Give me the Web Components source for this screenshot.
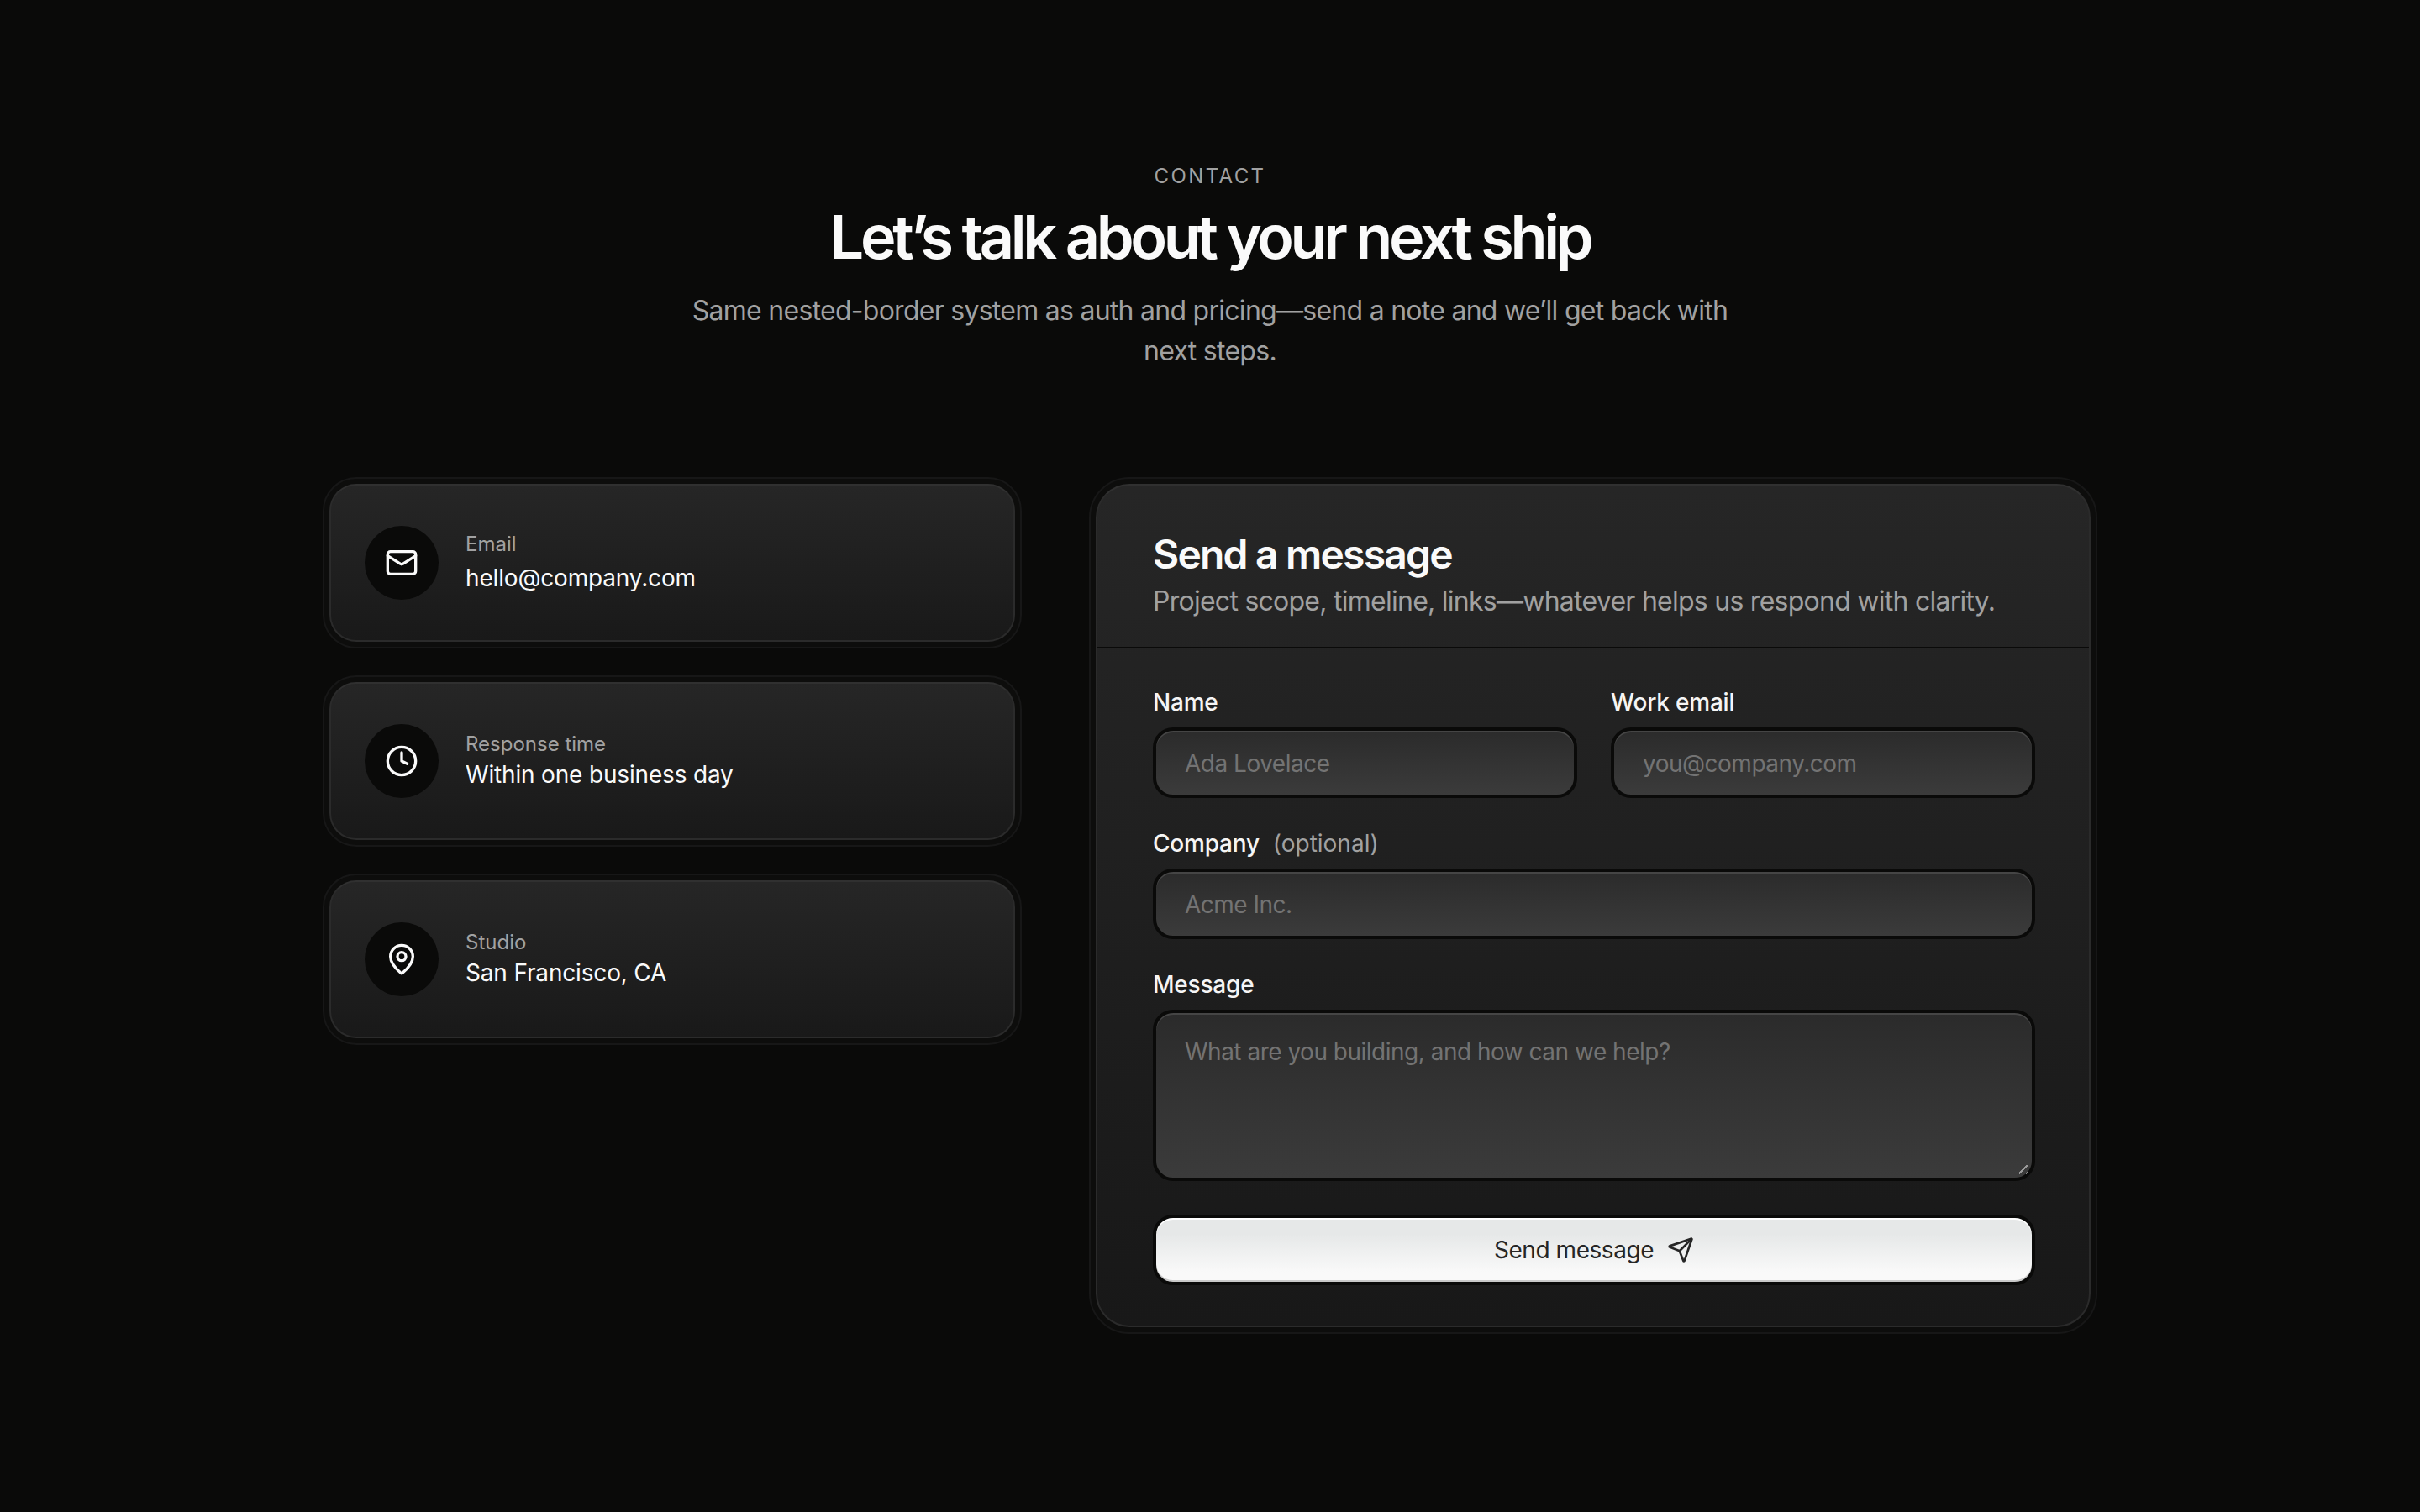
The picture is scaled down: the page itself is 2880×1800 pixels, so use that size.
<!DOCTYPE html>
<html lang="en">
<head>
<meta charset="utf-8">
<title>Contact</title>
<style>
  html, body { margin: 0; background: #0a0a09; }
  body { font-family: Inter, "Noto Sans", sans-serif; color: #fafafa; }
</style>
</head>
<body>
<contact-page>
  <section-intro slot="intro" eyebrow="CONTACT" heading="Let’s talk about your next ship">
    Same nested-border system as auth and pricing—send a note and we’ll get back with next steps.
  </section-intro>

  <info-card slot="info" label="Email" linked>
    <svg slot="icon" viewBox="0 0 24 24"><rect width="20" height="16" x="2" y="4" rx="2"/><path d="m22 7-8.97 5.7a1.94 1.94 0 0 1-2.06 0L2 7"/></svg>
    hello@company.com
  </info-card>
  <info-card slot="info" label="Response time">
    <svg slot="icon" viewBox="0 0 24 24"><circle cx="12" cy="12" r="10"/><polyline points="12 6 12 12 16 14"/></svg>
    Within one business day
  </info-card>
  <info-card slot="info" label="Studio">
    <svg slot="icon" viewBox="0 0 24 24"><path d="M20 10c0 4.993-5.539 10.193-7.399 11.799a1 1 0 0 1-1.202 0C9.539 20.193 4 14.993 4 10a8 8 0 0 1 16 0"/><circle cx="12" cy="10" r="3"/></svg>
    San Francisco, CA
  </info-card>

  <message-panel slot="form" heading="Send a message" sub="Project scope, timeline, links—whatever helps us respond with clarity.">
    <div class="pair" style="display:grid;grid-template-columns:1fr 1fr;gap:40px">
      <form-field label="Name" placeholder="Ada Lovelace"></form-field>
      <form-field label="Work email" placeholder="you@company.com"></form-field>
    </div>
    <form-field label="Company" hint="(optional)" placeholder="Acme Inc."></form-field>
    <form-field label="Message" placeholder="What are you building, and how can we help?" multiline></form-field>
    <send-button>Send message</send-button>
  </message-panel>
</contact-page>

<script>
// Pagina completa: cabecera y las dos columnas
class ContactPage extends HTMLElement {
  constructor() {
    super();
    this.attachShadow({ mode: 'open' });
    this.shadowRoot.innerHTML = `
      <style>
        :host { display: block; padding: 194px 384px 192px; box-sizing: border-box; min-height: 1800px; }
        .columns { display: grid; grid-template-columns: 832px 1200px; gap: 80px; margin-top: 126px; align-items: start; }
        .info { display: flex; flex-direction: column; gap: 32px; }
      </style>
      <slot name="intro"></slot>
      <div class="columns">
        <div class="info"><slot name="info"></slot></div>
        <slot name="form"></slot>
      </div>`;
  }
}

class SectionIntro extends HTMLElement {
  constructor() {
    super();
    this.attachShadow({ mode: 'open' });
  }
  connectedCallback() {
    this.shadowRoot.innerHTML = `
      <style>
        :host { display: block; text-align: center; }
        .eyebrow { font-size: 24px; line-height: 32px; letter-spacing: 0.1em; color: #a1a1a1; }
        h1 { margin: 16px 0 0; font-size: 72px; line-height: 80px; font-weight: 600; letter-spacing: -4.35px; color: #fafafa; }
        p { margin: 24px auto 0; max-width: 1280px; font-size: 32px; line-height: 48px; letter-spacing: -0.73px; color: #a1a1a1; }
      </style>
      <div class="eyebrow">${this.getAttribute('eyebrow')}</div>
      <h1>${this.getAttribute('heading')}</h1>
      <p><slot></slot></p>`;
  }
}

// Tarjeta de contacto con doble borde
class InfoCard extends HTMLElement {
  constructor() {
    super();
    this.attachShadow({ mode: 'open' });
  }
  connectedCallback() {
    this.shadowRoot.innerHTML = `
      <style>
        :host { display: block; box-sizing: border-box; padding: 6px; border: 2px solid #171717; border-radius: 40px; background: #0d0d0c; }
        .inner { display: flex; align-items: center; gap: 32px; padding: 48px 40px; border: 2px solid #2b2b2b; border-top-color: #303030; border-radius: 32px; background: linear-gradient(#262626, #191919); }
        .badge { width: 88px; height: 88px; flex: none; border-radius: 50%; background: #0a0a09; display: flex; align-items: center; justify-content: center; }
        ::slotted(svg) { width: 40px; height: 40px; fill: none; stroke: #fafafa; stroke-width: 2; stroke-linecap: round; stroke-linejoin: round; }
        .label { font-size: 24px; line-height: 32px; color: #a1a1a1; }
        .value { font-size: 28px; line-height: 40px; letter-spacing: -0.17px; color: #fafafa; }
        :host([linked]) .value { margin-top: 4px; }
      </style>
      <div class="inner">
        <div class="badge"><slot name="icon"></slot></div>
        <div>
          <div class="label">${this.getAttribute('label')}</div>
          <div class="value"><slot></slot></div>
        </div>
      </div>`;
  }
}

class MessagePanel extends HTMLElement {
  constructor() {
    super();
    this.attachShadow({ mode: 'open' });
  }
  connectedCallback() {
    this.shadowRoot.innerHTML = `
      <style>
        :host { display: block; box-sizing: border-box; padding: 6px; border: 2px solid #171717; border-radius: 48px; background: #0d0d0c; }
        .inner { border: 2px solid #2b2b2b; border-top-color: #303030; border-radius: 40px; background: linear-gradient(#262626, #181818); }
        header { padding: 54px 64px 30px 66px; border-bottom: 2px solid #0a0a09; }
        h2 { margin: 0; font-size: 48px; line-height: 56px; font-weight: 600; letter-spacing: -1.8px; color: #fafafa; }
        p { margin: 4px 0 0; font-size: 32px; line-height: 48px; letter-spacing: -0.74px; color: #a1a1a1; }
        .body { display: flex; flex-direction: column; gap: 36px; padding: 46px 64px 48px 66px; }
      </style>
      <div class="inner">
        <header>
          <h2>${this.getAttribute('heading')}</h2>
          <p>${this.getAttribute('sub')}</p>
        </header>
        <div class="body"><slot></slot></div>
      </div>`;
  }
}

class FormField extends HTMLElement {
  constructor() {
    super();
    this.attachShadow({ mode: 'open' });
  }
  connectedCallback() {
    const label = this.getAttribute('label');
    const hint = this.getAttribute('hint');
    const placeholder = this.getAttribute('placeholder');
    const control = this.hasAttribute('multiline')
      ? `<textarea id="f" placeholder="${placeholder}"></textarea>`
      : `<input id="f" placeholder="${placeholder}">`;
    this.shadowRoot.innerHTML = `
      <style>
        :host { display: block; }
        label { display: block; margin-bottom: 12px; font-size: 28px; line-height: 36px; font-weight: 450; letter-spacing: -0.2px; color: #f5f5f5; }
        label span { margin-left: 8px; font-weight: 400; letter-spacing: 0; color: #a1a1a1; }
        input, textarea { display: block; width: 100%; box-sizing: border-box; margin: 0; height: 84px; padding: 2px 34px 0; border: 4px solid #0a0a09; border-radius: 24px; outline: none; font: 400 28px/36px Inter, sans-serif; letter-spacing: -0.5px; color: #fafafa; background: linear-gradient(#2b2b2b, #3b3b3b); box-shadow: inset 0 2px 0 #454545; color-scheme: dark; }
        textarea { height: 204px; padding: 28px 34px; resize: vertical; }
        /* asa de redimensionar: dos trazos diagonales */
        textarea::-webkit-resizer {
          background:
            linear-gradient(135deg, transparent 29%, #9a9a9a 29%, #9a9a9a 38%, transparent 38%) 0 0 / 15px 15px no-repeat,
            linear-gradient(135deg, transparent 25%, #8a8a8a 25%, #8a8a8a 50%, transparent 50%) 8px 8px / 4px 4px no-repeat;
        }
        ::placeholder { color: #737373; opacity: 1; }
      </style>
      <label for="f">${label}${hint ? `<span> ${hint}</span>` : ''}</label>
      ${control}`;
  }
}

class SendButton extends HTMLElement {
  constructor() {
    super();
    this.attachShadow({ mode: 'open' });
    this.shadowRoot.innerHTML = `
      <style>
        :host { display: block; margin-top: 4px; }
        button { display: flex; align-items: center; justify-content: center; gap: 16px; width: 100%; height: 84px; box-sizing: border-box; border: 4px solid #0a0a09; border-radius: 24px; font: 400 28px/36px Inter, sans-serif; letter-spacing: -0.45px; color: #262626; background: linear-gradient(#e6e8e8 25%, #f9f9f9 85%); box-shadow: inset 0 2px 0 #fff, inset 0 -2px 0 #c9c9c9; }
        svg { width: 32px; height: 32px; fill: none; stroke: #262626; stroke-width: 2; stroke-linecap: round; stroke-linejoin: round; }
      </style>
      <button type="button">
        <slot></slot>
        <svg viewBox="0 0 24 24"><path d="M14.536 21.686a.5.5 0 0 0 .937-.024l6.5-19a.496.496 0 0 0-.635-.635l-19 6.5a.5.5 0 0 0-.024.937l7.93 3.18a2 2 0 0 1 1.112 1.11z"/><path d="m21.854 2.147-10.94 10.939"/></svg>
      </button>`;
  }
}

customElements.define('contact-page', ContactPage);
customElements.define('section-intro', SectionIntro);
customElements.define('info-card', InfoCard);
customElements.define('message-panel', MessagePanel);
customElements.define('form-field', FormField);
customElements.define('send-button', SendButton);
</script>
</body>
</html>
